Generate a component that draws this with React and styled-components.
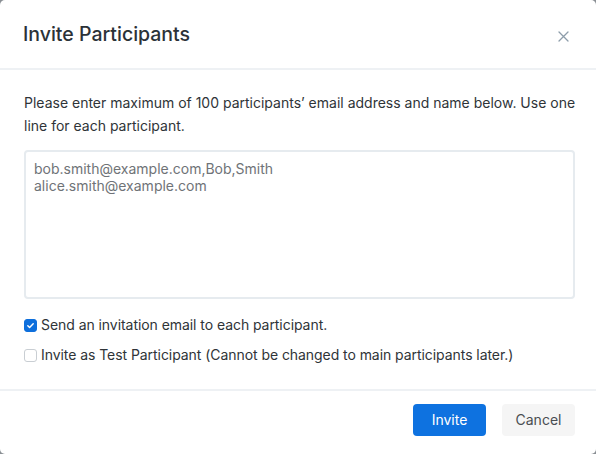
import React, { useState } from "react";
import styled, { createGlobalStyle } from "styled-components";

const Global = createGlobalStyle`
  html, body { margin: 0; padding: 0; background: #8a8f94; }
  body { font-family: Inter, "Noto Sans", sans-serif; }
  * { box-sizing: border-box; }
`;

const Modal = styled.div`
  width: 596px;
  height: 454px;
  background: #fff;
  border-radius: 5px;
  display: flex;
  flex-direction: column;
  overflow: hidden;
`;

const Header = styled.div`
  height: 70px;
  padding: 0 26px 0 23px;
  display: flex;
  align-items: center;
  justify-content: space-between;
  border-bottom: 2px solid #eef1f4;
`;

const Title = styled.h2`
  margin: 0;
  font-size: 19.5px;
  font-weight: 500;
  color: #2b3238;
`;

const CloseBtn = styled.button`
  border: 0;
  background: none;
  padding: 0;
  width: 14px;
  height: 14px;
  display: flex;
  align-items: center;
  justify-content: center;
  cursor: pointer;
  margin-top: 5px;
`;

const Body = styled.div`
  flex: 1;
  padding: 21px 22px 0 24px;
  display: flex;
  flex-direction: column;
`;

const Intro = styled.p`
  margin: 0 -14px 0 0;
  font-size: 14px;
  line-height: 23px;
  color: #2f3438;
`;

const Area = styled.textarea`
  margin-top: 13px;
  width: 551px;
  height: 149px;
  border: 2px solid #e6ebef;
  border-radius: 4px;
  padding: 8px 8px;
  font-family: Inter, "Noto Sans", sans-serif;
  font-size: 14px;
  line-height: 17px;
  color: #6f7377;
  resize: none;
  outline: none;
`;

const Options = styled.div`
  margin-top: 18px;
  display: flex;
  flex-direction: column;
  gap: 14px;
`;

const Option = styled.label`
  display: flex;
  align-items: center;
  gap: 4px;
  font-size: 14px;
  line-height: 16px;
  letter-spacing: -0.06px;
  color: #2f3438;
  cursor: pointer;
`;

const Box = styled.span`
  width: 13px;
  height: 13px;
  border-radius: 3px;
  display: flex;
  align-items: center;
  justify-content: center;
  background: ${(p) => (p.$on ? "#0e6fdc" : "#fff")};
  border: 1px solid ${(p) => (p.$on ? "#0e6fdc" : "#c9ced3")};
`;

const Footer = styled.div`
  height: 65px;
  border-top: 2px solid #eef1f4;
  display: flex;
  align-items: center;
  justify-content: flex-end;
  gap: 16px;
  padding: 0 21px 6px 0;
`;

const Button = styled.button`
  width: 73px;
  height: 32px;
  border: 0;
  border-radius: 4px;
  font-family: Inter, "Noto Sans", sans-serif;
  font-size: 14px;
  cursor: pointer;
  background: ${(p) => (p.$primary ? "#0e72e0" : "#f5f5f5")};
  color: ${(p) => (p.$primary ? "#fff" : "#4a4e52")};
`;

const Check = ({ on, onClick, children }) => (
  <Option onClick={onClick}>
    <Box $on={on}>
      {on && (
        <svg width="9" height="9" viewBox="0 0 10 10">
          <path d="M2 5.2l2 2L8 3" fill="none" stroke="#fff" strokeWidth="1.6" strokeLinecap="round" strokeLinejoin="round" />
        </svg>
      )}
    </Box>
    {children}
  </Option>
);

export default function App() {
  const [sendMail, setSendMail] = useState(true);
  const [testUser, setTestUser] = useState(false);

  return (
    <>
      <Global />
      <Modal>
        <Header>
          <Title>Invite Participants</Title>
          <CloseBtn aria-label="close">
            <svg width="11" height="11" viewBox="0 0 11 11">
              <path d="M1 1l9 9M10 1l-9 9" stroke="#8d9daa" strokeWidth="1.3" strokeLinecap="round" />
            </svg>
          </CloseBtn>
        </Header>
        <Body>
          <Intro>
            Please enter maximum of 100 participants’ email address and name below. Use one line for each participant.
          </Intro>
          <Area defaultValue={"bob.smith@example.com,Bob,Smith\nalice.smith@example.com"} />
          <Options>
            <Check on={sendMail} onClick={() => setSendMail(!sendMail)}>
              Send an invitation email to each participant.
            </Check>
            <Check on={testUser} onClick={() => setTestUser(!testUser)}>
              Invite as Test Participant (Cannot be changed to main participants later.)
            </Check>
          </Options>
        </Body>
        <Footer>
          <Button $primary>Invite</Button>
          <Button>Cancel</Button>
        </Footer>
      </Modal>
    </>
  );
}
